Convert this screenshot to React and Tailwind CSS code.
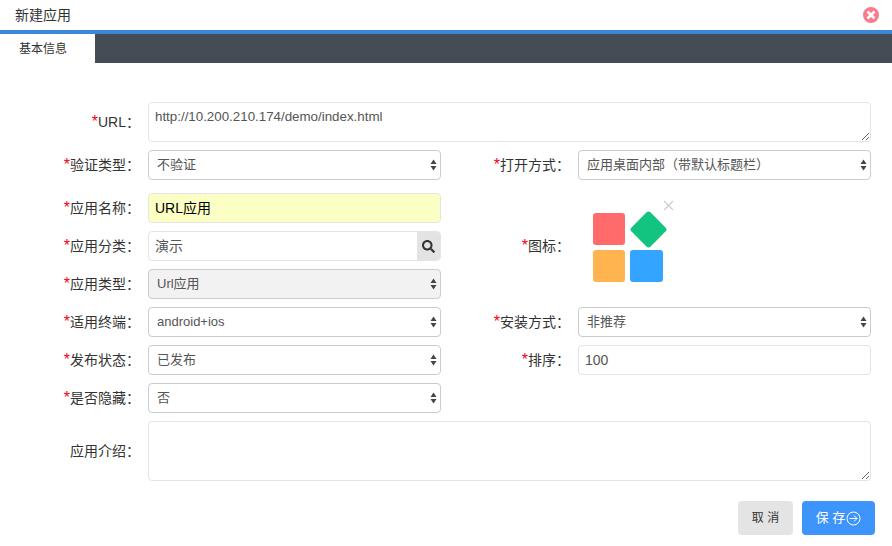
import React from 'react'
import { FaSearch } from 'react-icons/fa'

const font = "font-['Helvetica_Neue','Liberation_Sans','Noto_Sans_CJK_SC',sans-serif]"

function Label({ text, required = true, className = '' }) {
  return (
    <div className={`pr-[8px] text-right text-[14px] leading-[20px] text-[#333] whitespace-nowrap ${className}`}>
      {required && <span className="text-[16px] leading-none text-[#f00020]">*</span>}
      {text}：
    </div>
  )
}

function Select({ value, disabled = false, className = '' }) {
  return (
    <div
      className={`h-[30px] flex items-center justify-between pl-[8px] pr-[3px] rounded-[4px] border border-[#ccc] text-[13px] text-[#555] ${
        disabled ? 'bg-[#f2f2f2]' : 'bg-white'
      } ${className}`}
    >
      <span>{value}</span>
      <svg width="7" height="12" viewBox="0 0 7 12" className="fill-[#444]">
        <path d="M3.5 0.5 L6.5 5 L0.5 5 Z" />
        <path d="M3.5 11.5 L6.5 7 L0.5 7 Z" />
      </svg>
    </div>
  )
}

function TextBox({ value, className = '' }) {
  return (
    <div className={`h-[30px] flex items-center px-[6px] rounded-[4px] border border-[#e4e4e4] text-[14px] ${className}`}>
      {value}
    </div>
  )
}

export default function App() {
  return (
    <div className={`w-[892px] h-[546px] bg-white overflow-hidden ${font}`}>
      <div className="h-[30px] flex items-center justify-between pl-[15px] pr-[13px]">
        <span className="text-[14px] text-[#333]">新建应用</span>
        <span className="w-[16px] h-[16px] rounded-full bg-[#fb7a8b] flex items-center justify-center">
          <svg width="10" height="10" viewBox="0 0 10 10" className="stroke-white" strokeWidth="2.6">
            <path d="M1.5 1.5 L8.5 8.5 M8.5 1.5 L1.5 8.5" />
          </svg>
        </span>
      </div>
      <div className="h-[4px] bg-[#3a87d6]" />
      <div className="h-[29px] bg-[#444c56] flex">
        <div className="w-[95px] bg-white flex items-center pl-[19px] text-[12px] text-[#333]">基本信息</div>
      </div>

      <div className="pt-[39px] grid grid-cols-[148px_293px_137px_293px] gap-y-[8px] items-center">
        <Label text="URL" className="self-start pt-[10px]" />
        <textarea
          readOnly
          defaultValue="http://10.200.210.174/demo/index.html"
          className="col-span-3 h-[40px] px-[6px] py-[5px] rounded-[4px] border border-[#e4e4e4] text-[13.33px] leading-[18px] text-[#555] outline-none"
        />

        <Label text="验证类型" />
        <Select value="不验证" />
        <Label text="打开方式" />
        <Select value="应用桌面内部（带默认标题栏）" />

        <Label text="应用名称" className="mt-[5px]" />
        <TextBox value="URL应用" className="bg-[#fbffc4] text-black mt-[5px]" />
        <Label text="图标" className="row-span-3 pt-[5px]" />
        <div className="row-span-3 self-start mt-[5px] pl-[15px] pt-[20px]">
          <div className="relative w-[70px] grid grid-cols-[32px_33px] gap-[5px]">
            <div className="h-[32px] rounded-[3px] bg-[#ff6b6b]" />
            <div className="h-[32px] flex items-center justify-center">
              <div className="ml-[3px] w-[27px] h-[27px] shrink-0 rounded-[3px] bg-[#13c380] rotate-45" />
            </div>
            <div className="h-[32px] rounded-[3px] bg-[#ffb450]" />
            <div className="h-[32px] rounded-[3px] bg-[#33a4ff]" />
            <svg width="11" height="11" viewBox="0 0 11 11" className="absolute left-[70px] top-[-13px] stroke-[#ccc]" strokeWidth="1.2">
              <path d="M1 1 L10 10 M10 1 L1 10" />
            </svg>
          </div>
        </div>

        <Label text="应用分类" />
        <div className="h-[30px] flex rounded-[4px] border border-[#e4e4e4] overflow-hidden text-[14px] text-[#555]">
          <span className="flex-1 flex items-center px-[6px]">演示</span>
          <span className="w-[23px] bg-[#e3e3e3] flex items-center justify-center text-[#333]">
            <FaSearch size={13} />
          </span>
        </div>

        <Label text="应用类型" />
        <Select value="Url应用" disabled />

        <Label text="适用终端" />
        <Select value="android+ios" />
        <Label text="安装方式" />
        <Select value="非推荐" />

        <Label text="发布状态" />
        <Select value="已发布" />
        <Label text="排序" />
        <TextBox value="100" className="text-[#555]" />

        <Label text="是否隐藏" />
        <Select value="否" />
        <div className="col-span-2" />

        <Label text="应用介绍" required={false} className="self-start pt-[20px]" />
        <textarea readOnly className="col-span-3 h-[60px] rounded-[4px] border border-[#e4e4e4] outline-none" />
      </div>

      <div className="mt-[20px] pr-[17px] flex justify-end gap-[9px]">
        <button className="w-[55px] h-[34px] rounded-[4px] bg-[#e4e4e4] text-[12px] text-[#333]">取 消</button>
        <button className="w-[73px] h-[34px] rounded-[4px] bg-[#3d94fb] text-[13px] text-white flex items-center justify-center gap-[1px]">
          保 存
          <svg width="15" height="15" viewBox="0 0 15 15" fill="none" className="stroke-white" strokeWidth="1">
            <circle cx="7.5" cy="7.5" r="6.5" />
            <path d="M3.5 7.5 H11 M8 4.5 L11 7.5 L8 10.5" />
          </svg>
        </button>
      </div>
    </div>
  )
}
